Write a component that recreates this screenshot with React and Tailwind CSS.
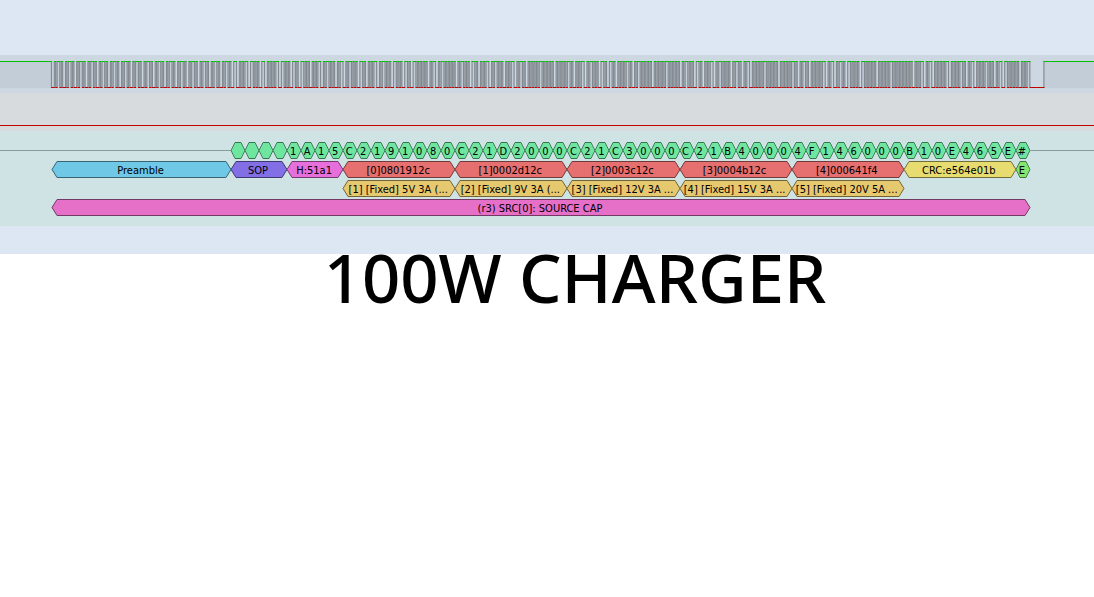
const SPAN = 1094;
const START = 52;
const PAYLOAD = 231;
const END = 1030;
const IDLE = 1044;

const NIBBLES = "1A15C2191080C21D2000C21C3000C21B40004F146000B10E465E";
const BIT = (END - PAYLOAD) / 285;

const SYMBOLS = {
  0: "11110", 1: "01001", 2: "10100", 3: "10101",
  4: "01010", 5: "01011", 6: "01110", 7: "01111",
  8: "10010", 9: "10011", A: "10110", B: "10111",
  C: "11010", D: "11011", E: "11100", F: "11101",
};
const SYNC1 = "11000";
const SYNC2 = "10001";
const EOP = "01101";

function buildBits() {
  const symbols = [SYNC1, SYNC1, SYNC1, SYNC2, ...NIBBLES.split("").map((n) => SYMBOLS[n]), EOP];
  return "01".repeat(32) + symbols.map((s) => s.split("").reverse().join("")).join("");
}

// Biphase mark coding: an edge at every bit start, plus one mid-bit for a 1.
function buildEdges() {
  const edges = [];
  const bits = buildBits();
  const first = END - bits.length * BIT;
  bits.split("").forEach((bit, i) => {
    const x = first + i * BIT;
    edges.push(x);
    if (bit === "1") edges.push(x + BIT / 2);
  });
  if (edges.length % 2 === 0) edges.push(END);
  edges.push(IDLE);
  return edges;
}

const EDGES = buildEdges();
const POINTS = [0, ...EDGES, SPAN];

const share = (n) => ({ width: `${(n / SPAN) * 100}%` });

function Waveform() {
  return (
    <svg
      className="block h-[27px] w-full"
      viewBox={`0 0 ${SPAN} 27`}
      preserveAspectRatio="none"
      role="img"
      aria-label="Data line"
    >
      {POINTS.slice(0, -1).map((x, i) => {
        const w = POINTS[i + 1] - x;
        return i % 2 === 0 ? (
          <rect key={i} x={x} y="0" width={w} height="27" fill="#c3cdd7" />
        ) : null;
      })}
      {EDGES.map((x, i) => (
        <rect key={i} x={x - 0.7} y="0" width="1.2" height="27" fill="#000" fillOpacity="0.34" />
      ))}
      {POINTS.slice(0, -1).map((x, i) => {
        const w = POINTS[i + 1] - x;
        return (
          <rect
            key={i}
            x={x - 0.4}
            y={i % 2 === 0 ? 0 : 26}
            width={w + 0.8}
            height="1"
            fill={i % 2 === 0 ? "#00c000" : "#c00000"}
          />
        );
      })}
    </svg>
  );
}

const TONES = {
  green: { body: "bg-[#6fe6a0] border-[#387350]", tip: "fill-[#6fe6a0] stroke-[#387350]" },
  blue: { body: "bg-[#6fc8e6] border-[#386473]", tip: "fill-[#6fc8e6] stroke-[#386473]" },
  violet: { body: "bg-[#826fe6] border-[#413873]", tip: "fill-[#826fe6] stroke-[#413873]" },
  pink: { body: "bg-[#e66fdc] border-[#73386e]", tip: "fill-[#e66fdc] stroke-[#73386e]" },
  red: { body: "bg-[#e66f6f] border-[#733838]", tip: "fill-[#e66f6f] stroke-[#733838]" },
  amber: { body: "bg-[#e6c86f] border-[#736438]", tip: "fill-[#e6c86f] stroke-[#736438]" },
  yellow: { body: "bg-[#e6dc6f] border-[#736e38]", tip: "fill-[#e6dc6f] stroke-[#736e38]" },
  lime: { body: "bg-[#82e66f] border-[#417338]", tip: "fill-[#82e66f] stroke-[#417338]" },
  magenta: { body: "bg-[#e66fc8] border-[#733864]", tip: "fill-[#e66fc8] stroke-[#733864]" },
};

function Segment({ size, tone, label, narrow }) {
  const { body, tip } = TONES[tone];
  const tipWidth = narrow ? "w-1" : "w-[5px]";
  return (
    <div className="flex h-[17px] shrink-0" style={share(size)}>
      <svg
        className={`h-[17px] shrink-0 overflow-visible ${tipWidth} ${tip}`}
        viewBox="0 0 5 17"
        preserveAspectRatio="none"
        aria-hidden="true"
      >
        <path d="M5 .5 L0 8.5 L5 16.5" />
      </svg>
      <div className={`flex min-w-0 flex-1 items-center justify-center border-y pt-px pr-0.5 whitespace-nowrap ${body}`}>
        <span className="relative z-10">{label}</span>
      </div>
      <svg
        className={`h-[17px] shrink-0 overflow-visible ${tipWidth} ${tip}`}
        viewBox="0 0 5 17"
        preserveAspectRatio="none"
        aria-hidden="true"
      >
        <path d="M0 .5 L5 8.5 L0 16.5" />
      </svg>
    </div>
  );
}

function Row({ offset, segments, children }) {
  return (
    <div className="flex h-[17px]">
      <div className="flex shrink-0 items-center" style={share(offset)}>
        {children}
      </div>
      {segments.map((s, i) => (
        <Segment key={i} {...s} />
      ))}
      {children && <div className="flex flex-1 items-center">{children}</div>}
    </div>
  );
}

const cell = (END - PAYLOAD) / 57;

const SYMBOL_ROW = ["", "", "", "", ...NIBBLES.split(""), "#"].map((label) => ({
  size: cell,
  tone: "green",
  label,
  narrow: true,
}));

const PACKET_ROW = [
  { size: PAYLOAD - START, tone: "blue", label: "Preamble" },
  { size: cell * 4, tone: "violet", label: "SOP" },
  { size: cell * 4, tone: "pink", label: "H:51a1" },
  { size: cell * 8, tone: "red", label: "[0]0801912c" },
  { size: cell * 8, tone: "red", label: "[1]0002d12c" },
  { size: cell * 8, tone: "red", label: "[2]0003c12c" },
  { size: cell * 8, tone: "red", label: "[3]0004b12c" },
  { size: cell * 8, tone: "red", label: "[4]000641f4" },
  { size: cell * 8, tone: "yellow", label: "CRC:e564e01b" },
  { size: cell, tone: "lime", label: "E", narrow: true },
];

const PAYLOAD_ROW = [
  "[1] [Fixed] 5V 3A (...",
  "[2] [Fixed] 9V 3A (...",
  "[3] [Fixed] 12V 3A ...",
  "[4] [Fixed] 15V 3A ...",
  "[5] [Fixed] 20V 5A ...",
].map((label) => ({ size: cell * 8, tone: "amber", label }));

const MESSAGE_ROW = [{ size: END - START, tone: "magenta", label: "(r3) SRC[0]: SOURCE CAP" }];

export default function App() {
  return (
    <main className="min-h-screen overflow-x-hidden bg-white text-black">
      <section className="bg-[#dde7f3] pt-[55px] pb-7" aria-label="Capture">
        <div className="bg-[#cdd7e1] pt-1.5 pb-[5px]">
          <Waveform />
        </div>
        <div className="bg-[#d7dbde] pt-8 pb-[5px]">
          <div className="h-px bg-[#c00000]" />
        </div>
        <div className="flex flex-col gap-0.5 bg-[#cfe2e4] pt-[11px] pb-2.5 font-['DejaVu_Sans_Condensed','DejaVu_Sans',sans-serif] text-[11px] leading-[15px]">
          <Row offset={PAYLOAD} segments={SYMBOL_ROW}>
            <div className="h-px flex-1 bg-[#8c9c9c]" />
          </Row>
          <Row offset={START} segments={PACKET_ROW} />
          <Row offset={PAYLOAD + cell * 8} segments={PAYLOAD_ROW} />
          <Row offset={START} segments={MESSAGE_ROW} />
        </div>
      </section>
      <h1 className="pl-14 text-center font-['Noto_Sans','Open_Sans',sans-serif] text-[67px] leading-[46px] font-medium">
        100W CHARGER
      </h1>
    </main>
  );
}
